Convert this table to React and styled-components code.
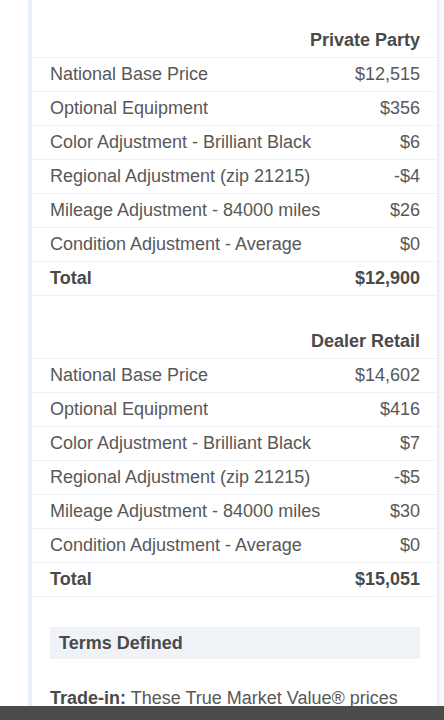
import React from "react";
import styled, { createGlobalStyle } from "styled-components";

const Global = createGlobalStyle`
  html, body { margin: 0; padding: 0; background: #f6f7f8; }
  body { font-family: "Liberation Sans", Arial, sans-serif; }
`;

const Page = styled.div`
  display: flex;
  background: #f6f7f8;
  height: 720px;
  overflow: hidden;
`;

const Gutter = styled.div`
  width: 28px;
  flex: none;
  background: #ffffff;
`;

const Card = styled.div`
  width: 405px;
  flex: none;
  background: #ffffff;
  border-left: 4px solid #e8eef6;
  border-right: 2px solid #ebecee;
`;

const Table = styled.div`
  display: flex;
  flex-direction: column;
`;

const HeaderRow = styled.div`
  height: ${(p) => p.$h}px;
  display: flex;
  align-items: flex-end;
  justify-content: flex-end;
  padding: 0 17px 7px 18px;
  box-sizing: border-box;
  border-bottom: 1px solid #eef0f3;
  font-size: 18px;
  font-weight: 700;
  color: #4a4a4a;
  line-height: 20px;
`;

const Row = styled.div`
  height: 34px;
  box-sizing: border-box;
  display: flex;
  align-items: center;
  justify-content: space-between;
  padding: 0 17px 2px 18px;
  border-bottom: 1px solid #eef0f3;
  font-size: 18px;
  line-height: 20px;
  font-weight: ${(p) => (p.$total ? 700 : 400)};
  color: ${(p) => (p.$total ? "#4a4a4a" : "#585858")};
`;

const Terms = styled.div`
  margin: 30px 17px 0 18px;
  height: 32px;
  display: flex;
  align-items: center;
  padding-left: 9px;
  background: #eff2f6;
  font-size: 18px;
  font-weight: 700;
  color: #4a4a4a;
`;

const Para = styled.p`
  margin: 28px 17px 0 18px;
  font-size: 18px;
  line-height: 22px;
  color: #585858;
  b { color: #4a4a4a; }
`;

const BottomBar = styled.div`
  position: fixed;
  left: 0;
  right: 0;
  bottom: 0;
  height: 14px;
  background: #4b4b4b;
`;

const sections = [
  {
    title: "Private Party",
    h: 58,
    rows: [
      ["National Base Price", "$12,515"],
      ["Optional Equipment", "$356"],
      ["Color Adjustment - Brilliant Black", "$6"],
      ["Regional Adjustment (zip 21215)", "-$4"],
      ["Mileage Adjustment - 84000 miles", "$26"],
      ["Condition Adjustment - Average", "$0"],
    ],
    total: "$12,900",
  },
  {
    title: "Dealer Retail",
    h: 63,
    rows: [
      ["National Base Price", "$14,602"],
      ["Optional Equipment", "$416"],
      ["Color Adjustment - Brilliant Black", "$7"],
      ["Regional Adjustment (zip 21215)", "-$5"],
      ["Mileage Adjustment - 84000 miles", "$30"],
      ["Condition Adjustment - Average", "$0"],
    ],
    total: "$15,051",
  },
];

export default function App() {
  return (
    <>
      <Global />
      <Page>
        <Gutter />
        <Card>
          {sections.map((s) => (
            <Table key={s.title}>
              <HeaderRow $h={s.h}>{s.title}</HeaderRow>
              {s.rows.map(([l, v]) => (
                <Row key={l}>
                  <span>{l}</span>
                  <span>{v}</span>
                </Row>
              ))}
              <Row $total>
                <span>Total</span>
                <span>{s.total}</span>
              </Row>
            </Table>
          ))}
          <Terms>Terms Defined</Terms>
          <Para>
            <b>Trade-in:</b> These True Market Value® prices
          </Para>
        </Card>
      </Page>
      <BottomBar />
    </>
  );
}
